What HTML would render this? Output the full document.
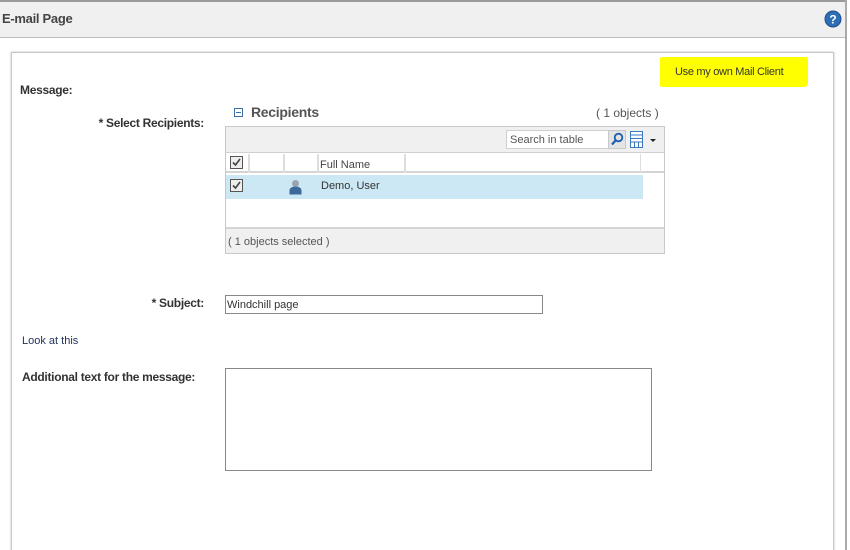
<!DOCTYPE html>
<html style="overflow:hidden;width:850px;height:550px"><head><meta charset="utf-8"><style>
*{margin:0;padding:0;box-sizing:border-box}
body{width:850px;height:550px;overflow:hidden;background:#fff;font-family:"Liberation Sans",sans-serif;color:#333;position:relative;font-size:11px}
.a{position:absolute;white-space:nowrap}
.b{font-weight:bold;color:#333;letter-spacing:-0.3px}
</style></head><body>
<div class="a" style="left:0;top:0;width:846px;height:38px;background:#f0f0f0;border-top:2px solid #9a9a9a;border-bottom:1px solid #bdbdbd"></div>
<div class="a" style="left:845px;top:0;width:2px;height:550px;background:#aaa"></div>
<div class="a b" style="left:2px;top:11px;font-size:13px;color:#444">E-mail Page</div>
<svg class="a" style="left:824px;top:10px" width="18" height="18"><circle cx="9" cy="9" r="8" fill="#2f6db5" stroke="#1d4f8c"/><text x="9" y="13.5" text-anchor="middle" font-family="Liberation Sans" font-weight="bold" font-size="12" fill="#fff">?</text></svg>
<div class="a" style="left:11px;top:52px;width:823px;height:500px;border:1px solid #c8c8c8;border-bottom:none;box-shadow:0 0 2px #bbb"></div>
<div class="a" style="left:660px;top:57px;width:148px;height:30px;background:#ffff00;border-radius:2px 2px 4px 2px"></div>
<div class="a" style="left:675px;top:66px;font-size:11px;color:#333;letter-spacing:-0.3px">Use my own Mail Client</div>
<div class="a b" style="left:20px;top:83px;font-size:12px">Message:</div>
<div class="a b" style="left:96px;top:116px;font-size:12px;width:108px;text-align:right">* Select Recipients:</div>
<div class="a" style="left:234px;top:108px;width:9px;height:9px;border:1px solid #3a6ea5"></div>
<div class="a" style="left:236px;top:112px;width:5px;height:1px;background:#3a6ea5"></div>
<div class="a b" style="left:251px;top:104px;font-size:14px;color:#555">Recipients</div>
<div class="a" style="left:596px;top:106px;font-size:12px;color:#555">( 1 objects )</div>
<div class="a" style="left:225px;top:126px;width:440px;height:128px;border:1px solid #c8c8c8;background:#fff"></div>
<div class="a" style="left:226px;top:127px;width:438px;height:26px;background:#f0f0f0;border-bottom:1px solid #d0d0d0"></div>
<div class="a" style="left:506px;top:130px;width:103px;height:19px;background:#fff;border:1px solid #d0d0d0;font-size:11px;color:#555;padding:3px 0 0 3px">Search in table</div>
<div class="a" style="left:608px;top:130px;width:18px;height:19px;background:#e4e4e4;border:1px solid #c8c8c8"></div>
<svg class="a" style="left:610px;top:132px" width="14" height="14"><circle cx="8.5" cy="5.5" r="3.8" fill="none" stroke="#1b5fb0" stroke-width="1.8"/><line x1="6" y1="8" x2="2" y2="12.5" stroke="#1b5fb0" stroke-width="2.2"/></svg>
<svg class="a" style="left:630px;top:131px" width="13" height="17"><rect x="0.5" y="0.5" width="12" height="16" fill="#fff" stroke="#3a78c0"/><g stroke="#3a78c0"><line x1="0" y1="4" x2="13" y2="4"/><line x1="0" y1="7.5" x2="13" y2="7.5"/><line x1="0" y1="11" x2="13" y2="11"/><line x1="4.5" y1="11" x2="4.5" y2="17"/><line x1="8.5" y1="11" x2="8.5" y2="17"/></g></svg>
<div class="a" style="left:650px;top:139px;border-left:3px solid transparent;border-right:3px solid transparent;border-top:3px solid #222"></div>
<div class="a" style="left:226px;top:153px;width:438px;height:20px;background:#fff;border-bottom:2px solid #d4d4d4"></div>
<div class="a" style="left:248px;top:154px;width:2px;height:19px;background:#ddd"></div>
<div class="a" style="left:283px;top:154px;width:2px;height:19px;background:#ddd"></div>
<div class="a" style="left:317px;top:154px;width:2px;height:19px;background:#ddd"></div>
<div class="a" style="left:404px;top:154px;width:2px;height:19px;background:#ddd"></div>
<div class="a" style="left:640px;top:154px;width:1px;height:19px;background:#ddd"></div>
<div class="a" style="left:320px;top:159px;font-size:11px;color:#444">Full Name</div>
<div class="a" style="left:226px;top:175px;width:417px;height:24px;background:#cce8f5"></div>
<svg class="a" style="left:230px;top:156px" width="13" height="13"><rect x="0.5" y="0.5" width="12" height="12" fill="#eee" stroke="#555"/><path d="M3 6.5l2.5 2.5 4.5-6" fill="none" stroke="#444" stroke-width="1.6"/></svg>
<svg class="a" style="left:230px;top:179px" width="13" height="13"><rect x="0.5" y="0.5" width="12" height="12" fill="#eee" stroke="#555"/><path d="M3 6.5l2.5 2.5 4.5-6" fill="none" stroke="#444" stroke-width="1.6"/></svg>
<svg class="a" style="left:289px;top:179px" width="13" height="16"><circle cx="6.5" cy="4.5" r="3.5" fill="#9aa5b0"/><path d="M0.5 15.5v-4c0-2.5 2.5-4 6-4s6 1.5 6 4v4z" fill="#3d6a9a"/></svg>
<div class="a" style="left:321px;top:180px;font-size:11px;color:#333">Demo, User</div>
<div class="a" style="left:226px;top:227px;width:438px;height:26px;background:#f0f0f0;border-top:2px solid #d4d4d4"></div>
<div class="a" style="left:228px;top:236px;font-size:11px;color:#555">( 1 objects selected )</div>
<div class="a b" style="left:100px;top:296px;font-size:12px;width:104px;text-align:right">* Subject:</div>
<div class="a" style="left:225px;top:295px;width:318px;height:19px;border:1px solid #888;font-size:11px;padding:3px 0 0 1px;color:#333">Windchill page</div>
<div class="a" style="left:22px;top:335px;font-size:11px;color:#1e2f5a">Look at this</div>
<div class="a b" style="left:22px;top:370px;font-size:12px">Additional text for the message:</div>
<div class="a" style="left:225px;top:368px;width:427px;height:103px;border:1px solid #888"></div>
</body></html>
